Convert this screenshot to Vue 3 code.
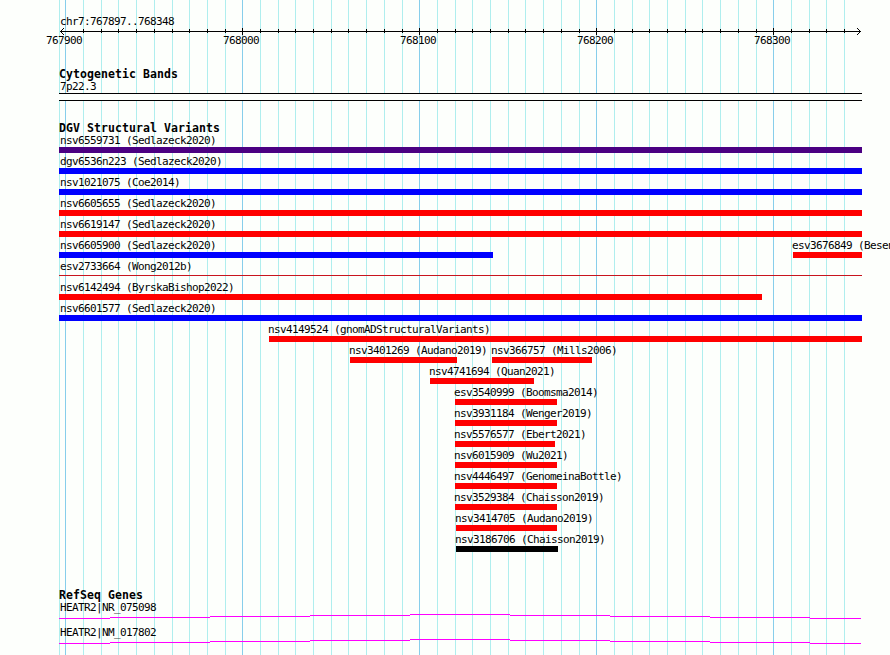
<template>
    <div class="browser">
        <svg class="grid" width="890" height="655" shape-rendering="crispEdges">
            <rect
                v-for="x in gridLines"
                :key="x"
                :class="majorLines.includes(x) ? 'grid__major' : 'grid__minor'"
                :x="x"
                y="0"
                width="1"
                height="655"
            />
        </svg>

        <header class="ruler">
            <div class="label label--left">chr7:767897..768348</div>
            <svg class="ruler__axis" width="803" height="7" shape-rendering="crispEdges">
                <rect x="1" y="3" width="801" height="1" />
                <rect
                    v-for="x in gridLines.slice(2)"
                    :key="x"
                    :x="x - 59"
                    :y="majorLines.includes(x) ? 0 : 1"
                    width="1"
                    :height="majorLines.includes(x) ? 7 : 4"
                />
                <path d="M2 2h1v1h-1zM3 1h1v1h-1zM4 0h1v1h-1zM2 4h1v1h-1zM3 5h1v1h-1zM4 6h1v1h-1z" />
                <path d="M800 2h1v1h-1zM799 1h1v1h-1zM798 0h1v1h-1zM800 4h1v1h-1zM799 5h1v1h-1zM798 6h1v1h-1z" />
            </svg>
            <div class="ruler__numbers">
                <span v-for="n in rulerNumbers" :key="n" class="label">{{ n }}</span>
            </div>
        </header>

        <section class="track track--bands">
            <h2 class="track__title">Cytogenetic Bands</h2>
            <div class="label label--left">7p22.3</div>
            <div class="band"></div>
        </section>

        <section class="track track--variants">
            <h2 class="track__title">DGV Structural Variants</h2>
            <div v-for="(row, i) in variantRows" :key="i" class="row">
                <div
                    v-for="(v, j) in row"
                    :key="v.name"
                    class="variant"
                    :style="{ marginLeft: v.start - (j ? row[j - 1].end : 59) + 'px', width: v.end - v.start + 'px' }"
                >
                    <div class="label" :class="v.start === 59 ? 'label--left' : 'label--inner'">{{ v.name }}</div>
                    <div class="bar" :class="'bar--' + v.color"></div>
                </div>
            </div>
        </section>

        <section class="track track--genes">
            <h2 class="track__title">RefSeq Genes</h2>
            <div v-for="gene in genes" :key="gene" class="gene">
                <div class="label label--left">{{ gene }}</div>
                <svg class="gene__line" width="803" height="5" shape-rendering="crispEdges">
                    <rect
                        v-for="s in geneSteps"
                        :key="s.x"
                        :x="s.x - 59"
                        :y="s.y"
                        :width="s.w"
                        height="1"
                    />
                </svg>
            </div>
        </section>
    </div>
</template>

<script setup>
const gridLines = [
    59, 65, 83, 101, 118, 136, 154, 172, 189, 207, 225, 242, 260, 278, 295, 313,
    331, 348, 366, 384, 402, 419, 437, 455, 472, 490, 508, 525, 543, 561, 579, 596,
    614, 632, 649, 667, 685, 702, 720, 738, 756, 773, 791, 809, 826, 844
]
const majorLines = [65, 242, 419, 596, 773]
const rulerNumbers = ['767900', '768000', '768100', '768200', '768300']

const variant = (name, start, end, color = 'red') => ({ name, start, end, color })

const variantRows = [
    [variant('nsv6559731 (Sedlazeck2020)', 59, 862, 'purple')],
    [variant('dgv6536n223 (Sedlazeck2020)', 59, 862, 'blue')],
    [variant('nsv1021075 (Coe2014)', 59, 862, 'blue')],
    [variant('nsv6605655 (Sedlazeck2020)', 59, 862)],
    [variant('nsv6619147 (Sedlazeck2020)', 59, 862)],
    [
        variant('nsv6605900 (Sedlazeck2020)', 59, 493, 'blue'),
        variant('esv3676849 (Besen', 793, 862)
    ],
    [variant('esv2733664 (Wong2012b)', 59, 862, 'thin')],
    [variant('nsv6142494 (ByrskaBishop2022)', 59, 762)],
    [variant('nsv6601577 (Sedlazeck2020)', 59, 862, 'blue')],
    [variant('nsv4149524 (gnomADStructuralVariants)', 269, 862)],
    [
        variant('nsv3401269 (Audano2019)', 350, 457),
        variant('nsv366757 (Mills2006)', 492, 592)
    ],
    [variant('nsv4741694 (Quan2021)', 430, 534)],
    [variant('esv3540999 (Boomsma2014)', 455, 557)],
    [variant('nsv3931184 (Wenger2019)', 455, 557)],
    [variant('nsv5576577 (Ebert2021)', 455, 555)],
    [variant('nsv6015909 (Wu2021)', 455, 557)],
    [variant('nsv4446497 (GenomeinaBottle)', 455, 557)],
    [variant('nsv3529384 (Chaisson2019)', 455, 557)],
    [variant('nsv3414705 (Audano2019)', 456, 557)],
    [variant('nsv3186706 (Chaisson2019)', 456, 558, 'black')]
]

const genes = ['HEATR2|NR_075098', 'HEATR2|NM_017802']
const geneSteps = [
    { x: 59, y: 4, w: 51 },
    { x: 110, y: 3, w: 100 },
    { x: 210, y: 2, w: 100 },
    { x: 310, y: 1, w: 100 },
    { x: 410, y: 0, w: 100 },
    { x: 510, y: 1, w: 100 },
    { x: 610, y: 2, w: 100 },
    { x: 710, y: 3, w: 100 },
    { x: 810, y: 4, w: 51 }
]
</script>

<style>
body {
    margin: 0;
    background: #fdfffc;
}
</style>

<style scoped>
.browser {
    position: relative;
    box-sizing: border-box;
    width: 890px;
    height: 655px;
    padding: 15px 0 0 59px;
    overflow: hidden;
    background: #fdfffc;
    color: #000;
    font-family: "DejaVu Sans Mono", monospace;
}

.grid {
    position: absolute;
    top: 0;
    left: 0;
}

.grid__minor {
    fill: #afeeee;
}

.grid__major {
    fill: #87ceeb;
}

.ruler,
.track {
    position: relative;
    width: 803px;
}

.label {
    height: 13px;
    font-size: 11px;
    line-height: 13px;
    letter-spacing: -0.622px;
    white-space: nowrap;
}

.label--left {
    padding-left: 1px;
}

.label--inner {
    margin-left: -1px;
}

.ruler {
    height: 53px;
}

.ruler__axis {
    display: block;
}

.ruler__numbers {
    display: flex;
    gap: 141px;
    margin: -1px 0 0 -13px;
}

.ruler__numbers .label {
    flex: 0 0 36px;
}

.track__title {
    height: 12px;
    margin: 0;
    font-size: 11.5px;
    font-weight: bold;
    line-height: 13px;
    letter-spacing: 0.077px;
    white-space: nowrap;
}

.track--bands {
    height: 54px;
}

.band {
    box-sizing: border-box;
    height: 8px;
    border-top: 1px solid #000;
    border-bottom: 1px solid #000;
    background: #fdfffc;
}

.track--variants {
    height: 467px;
}

.row {
    display: flex;
    height: 21px;
}

.variant {
    flex: none;
}

.bar {
    height: 6px;
}

.bar--red {
    background: #f00;
}

.bar--blue {
    background: #00f;
}

.bar--purple {
    background: #4b0082;
}

.bar--black {
    background: #000;
}

.bar--thin {
    height: 1px;
    margin-top: 2px;
    background: #c8141e;
}

.gene {
    height: 25px;
}

.gene__line {
    display: block;
    fill: #f0f;
}
</style>
